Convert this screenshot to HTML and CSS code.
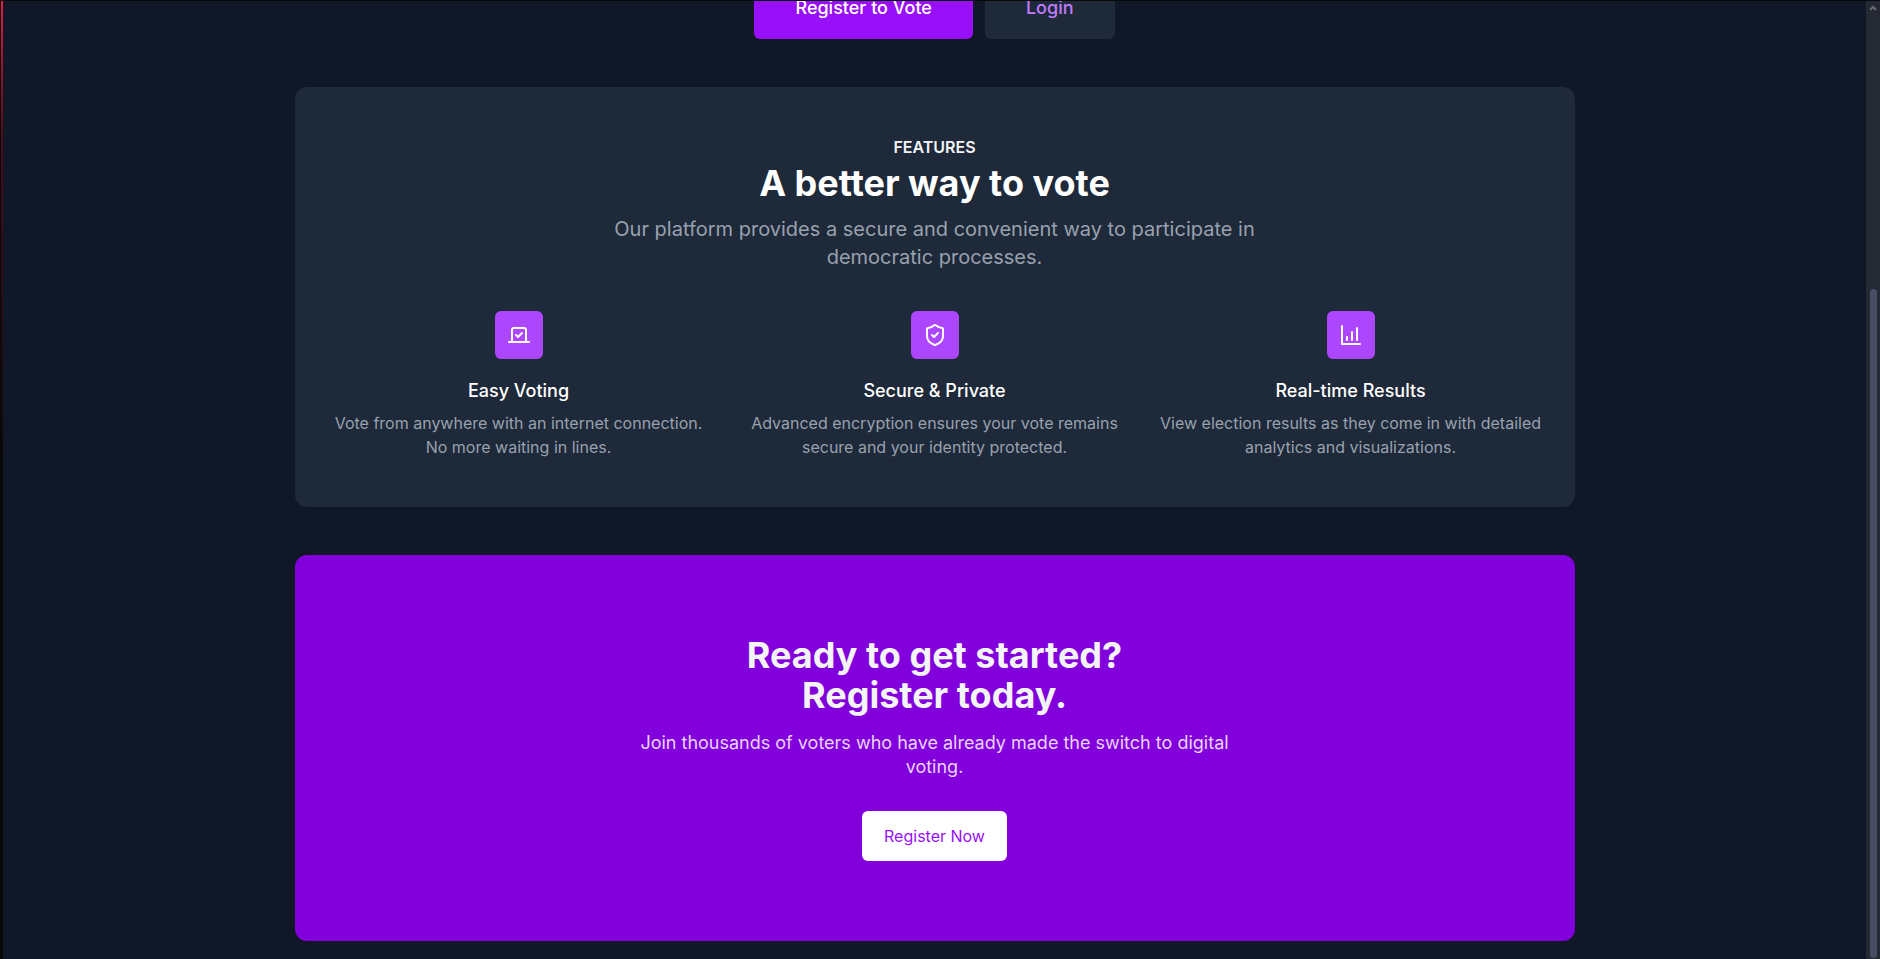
FILE: index.html
```html
<!DOCTYPE html>
<html lang="en">
<head>
<meta charset="utf-8">
<title>Online Voting</title>
<link rel="stylesheet" href="styles.css">
</head>
<body>
<div class="window">
  <div class="window-edge"></div>
  <main class="page">
    <div class="hero-actions">
      <a class="button button-primary" href="#register">Register to Vote</a>
      <a class="button button-secondary" href="#login">Login</a>
    </div>

    <section class="card features">
      <p class="eyebrow">Features</p>
      <h2 class="heading features-heading">A better way to vote</h2>
      <p class="lead">Our platform provides a secure and convenient way to participate in democratic processes.</p>
      <div class="feature-grid">
        <article class="feature">
          <div class="feature-icon">
            <svg viewBox="0 0 24 24" aria-hidden="true"><path d="m9 12 2 2 4-4"/><path d="M5 7c0-1.1.9-2 2-2h10a2 2 0 0 1 2 2v12H5V7Z"/><path d="M22 19H2"/></svg>
          </div>
          <h3 class="feature-title">Easy Voting</h3>
          <p class="feature-text">Vote from anywhere with an internet connection. No more waiting in lines.</p>
        </article>
        <article class="feature">
          <div class="feature-icon">
            <svg viewBox="0 0 24 24" aria-hidden="true"><path d="M20 13c0 5-3.500 7.500-7.660 8.950a1 1 0 0 1-.67-.01C7.500 20.500 4 18 4 13V6a1 1 0 0 1 1-1c2 0 4.500-1.200 6.240-2.720a1.170 1.170 0 0 1 1.520 0C14.510 3.810 17 5 19 5a1 1 0 0 1 1 1z"/><path d="m9 12 2 2 4-4"/></svg>
          </div>
          <h3 class="feature-title">Secure &amp; Private</h3>
          <p class="feature-text">Advanced encryption ensures your vote remains secure and your identity protected.</p>
        </article>
        <article class="feature">
          <div class="feature-icon">
            <svg viewBox="0 0 24 24" aria-hidden="true"><path d="M3 3v18h18"/><path d="M18 17V5"/><path d="M13 17V9"/><path d="M8 17v-3"/></svg>
          </div>
          <h3 class="feature-title">Real-time Results</h3>
          <p class="feature-text">View election results as they come in with detailed analytics and visualizations.</p>
        </article>
      </div>
    </section>

    <section class="card cta">
      <h2 class="heading cta-heading">Ready to get started?<br>Register today.</h2>
      <p class="cta-text">Join thousands of voters who have already made the switch to digital voting.</p>
      <a class="cta-button" href="#register">Register Now</a>
    </section>
  </main>
  <div class="scrollbar" aria-hidden="true">
    <svg class="scrollbar-arrow" viewBox="0 0 8 6"><path d="M1 5 4 2l3 3"/></svg>
    <div class="scrollbar-thumb"></div>
  </div>
</div>
</body>
</html>
```

FILE: styles.css
```css
* {
  box-sizing: border-box;
  margin: 0;
}

body {
  background: #08080b;
  font-family: Inter, "Liberation Sans", sans-serif;
  font-size: 16px;
  line-height: 24px;
}

a {
  text-decoration: none;
}

.window {
  display: flex;
  height: 100vh;
  padding-top: 1px;
  overflow: hidden;
}

.window-edge {
  flex: none;
  width: 3px;
  border-left: 1px solid #08080b;
  background: linear-gradient(#e11d48, #4c0d1c 14%, #08080b 48%);
}

.page {
  display: flex;
  flex: 1;
  flex-direction: column;
  align-items: center;
  gap: 48px;
  overflow: hidden;
  background: #101726;
}

/* The page is scrolled, so only the lower part of the hero buttons shows. */
.hero-actions {
  display: flex;
  flex: none;
  align-items: flex-end;
  gap: 12px;
  height: 38px;
}

.button {
  padding: 16px 40px;
  border: 1px solid transparent;
  border-radius: 6px;
  font-size: 18px;
  font-weight: 500;
  line-height: 28px;
}

.button-primary {
  background: #9810fa;
  color: #fff;
}

.button-secondary {
  background: #1e2939;
  color: #c27aff;
}

.card {
  flex: none;
  width: 100%;
  max-width: 1280px;
  border-radius: 12px;
  text-align: center;
}

.features {
  padding: 48px 32px;
  background: #1e2939;
}

.eyebrow {
  color: #f3f4f6;
  font-weight: 600;
  text-transform: uppercase;
}

.heading {
  font-size: 36px;
  font-weight: 700;
}

.features-heading {
  margin-top: 8px;
  color: #fff;
  line-height: 32px;
}

.lead {
  max-width: 672px;
  margin: 16px auto 0;
  color: #99a1af;
  font-size: 20px;
  line-height: 28px;
}

.feature-grid {
  display: grid;
  grid-template-columns: repeat(3, 1fr);
  gap: 32px;
  margin-top: 40px;
}

.feature {
  display: flex;
  flex-direction: column;
  align-items: center;
}

.feature-icon {
  display: grid;
  place-items: center;
  width: 48px;
  height: 48px;
  border-radius: 6px;
  background: #ad46ff;
}

.feature-icon svg {
  width: 24px;
  height: 24px;
  fill: none;
  stroke: #fff;
  stroke-width: 2;
  stroke-linecap: round;
  stroke-linejoin: round;
}

.feature-title {
  margin-top: 20px;
  color: #fff;
  font-size: 18px;
  font-weight: 500;
}

.feature-text {
  margin-top: 8px;
  color: #99a1af;
}

.cta {
  display: flex;
  flex-direction: column;
  align-items: center;
  padding: 80px 24px;
  background: #8200db;
}

.cta-heading {
  color: #f3f4f6;
  line-height: 40px;
}

.cta-text {
  max-width: 624px;
  margin-top: 16px;
  color: #e9d4ff;
  font-size: 18px;
}

.cta-button {
  margin-top: 32px;
  padding: 13px 22px;
  border-radius: 6px;
  background: #fff;
  color: #9810fa;
}

.scrollbar {
  display: flex;
  flex: none;
  flex-direction: column;
  align-items: center;
  justify-content: space-between;
  width: 14px;
  padding: 4px 0 1px;
  background: #252933;
}

.scrollbar-arrow {
  width: 8px;
  height: 6px;
  fill: none;
  stroke: #6b6b70;
  stroke-width: 2;
}

.scrollbar-thumb {
  width: 7px;
  height: 70.2%;
  border-radius: 4px;
  background: #494d64;
}
```
